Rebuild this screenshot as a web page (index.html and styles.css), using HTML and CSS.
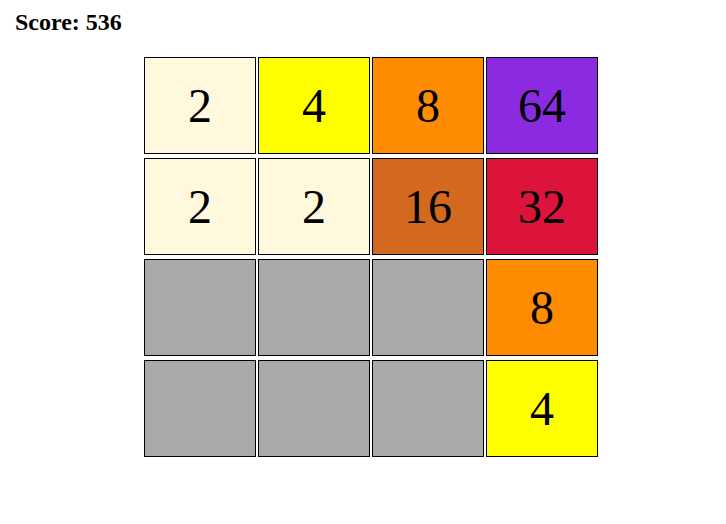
FILE: index.html
```html
<!DOCTYPE html>
<html lang="en">
<head>
    <meta charset="UTF-8">
    <title>2048</title>
    <link rel="stylesheet" href="styles.css">
</head>
<body>
    <div id="score">Score: 536</div>

    <div id="board">
        <div class="tile t2">2</div>
        <div class="tile t4">4</div>
        <div class="tile t8">8</div>
        <div class="tile t64">64</div>

        <div class="tile t2">2</div>
        <div class="tile t2">2</div>
        <div class="tile t16">16</div>
        <div class="tile t32">32</div>

        <div class="tile"></div>
        <div class="tile"></div>
        <div class="tile"></div>
        <div class="tile t8">8</div>

        <div class="tile"></div>
        <div class="tile"></div>
        <div class="tile"></div>
        <div class="tile t4">4</div>
    </div>
</body>
</html>
```

FILE: styles.css
```css
body {
    font-family: "Liberation Serif", "Times New Roman", serif;
    margin: 8px;
    background-color: white;
}

#score {
    font-size: 24px;
    font-weight: bold;
    padding-left: 7px;
    line-height: 28px;
}

#board {
    display: grid;
    grid-template-columns: repeat(4, 112px);
    grid-auto-rows: 97px;
    column-gap: 2px;
    row-gap: 4px;
    margin-top: 21px;
    margin-left: 136px;
    width: max-content;
}

.tile {
    box-sizing: border-box;
    border: 1px solid black;
    background-color: darkgray;
    display: flex;
    align-items: center;
    justify-content: center;
    font-size: 48px;
}

.t2 { background-color: cornsilk; }
.t4 { background-color: yellow; }
.t8 { background-color: darkorange; }
.t16 { background-color: chocolate; }
.t32 { background-color: crimson; }
.t64 { background-color: blueviolet; }
```
